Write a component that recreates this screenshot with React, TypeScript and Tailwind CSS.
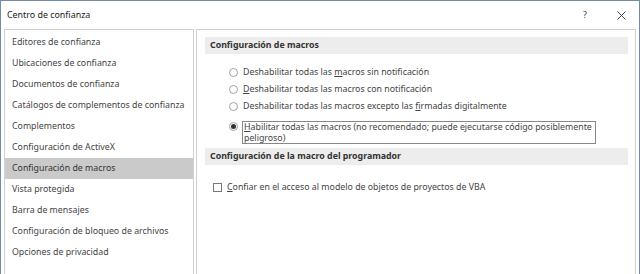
import React from "react";

const leftItems = [
  "Editores de confianza",
  "Ubicaciones de confianza",
  "Documentos de confianza",
  "Catálogos de complementos de confianza",
  "Complementos",
  "Configuración de ActiveX",
  "Configuración de macros",
  "Vista protegida",
  "Barra de mensajes",
  "Configuración de bloqueo de archivos",
  "Opciones de privacidad",
];

function Radio({ checked }: { checked?: boolean }) {
  return (
    <span className="w-[9px] h-[9px] rounded-full border border-[#a0a0a0] bg-white flex items-center justify-center shrink-0">
      {checked && <span className="w-[5px] h-[5px] rounded-full bg-[#333]" />}
    </span>
  );
}

export default function App() {
  return (
    <div
      className="w-[640px] h-[274px] bg-white border-x border-t border-[#6f8ca8] flex flex-col text-[8.8px] text-[#444] overflow-hidden"
      style={{ fontFamily: '"Noto Sans", "Open Sans", sans-serif' }}
    >
      <div className="h-[28px] flex items-center pl-[6px] pr-[13px] shrink-0">
        <span className="text-[#222] text-[8.9px] flex-1">Centro de confianza</span>
        <span className="text-[#444] text-[9px] mr-[30px]">?</span>
        <svg width="9" height="9" viewBox="0 0 9 9">
          <path d="M0.5 0.5 L8.5 8.5 M8.5 0.5 L0.5 8.5" stroke="#444" strokeWidth="1" />
        </svg>
      </div>
      <div className="flex flex-1 pl-[3px] pr-[3px] gap-[2px]">
        <div className="w-[190px] border border-[#d0d0d0] border-b-0 pt-[2px] flex flex-col">
          {leftItems.map((t, i) => (
            <div
              key={t}
              className={`h-[21px] flex items-center pl-[7px] whitespace-nowrap ${
                i === 6 ? "bg-[#cacaca] text-[#333]" : ""
              }`}
            >
              {t}
            </div>
          ))}
        </div>
        <div className="flex-1 border border-[#d0d0d0] border-b-0 pl-[8px] pr-[7px] pt-[7px] flex flex-col">
          <div className="h-[17px] bg-[#ededed] flex items-center pl-[5px] font-bold text-[#333]">
            Configuración de macros
          </div>
          <div className="flex flex-col pl-[24px] pt-[10px]">
            <div className="h-[17px] flex items-center gap-[5px]">
              <Radio />
              <span>
                Deshabilitar todas las <u>m</u>acros sin notificación
              </span>
            </div>
            <div className="h-[17px] flex items-center gap-[5px]">
              <Radio />
              <span>
                <u>D</u>eshabilitar todas las macros con notificación
              </span>
            </div>
            <div className="h-[17px] flex items-center gap-[5px]">
              <Radio />
              <span>
                Deshabilitar todas las macros excepto las <u>f</u>irmadas digitalmente
              </span>
            </div>
            <div className="flex items-start gap-[4px] mt-[6px]">
              <span className="mt-[1px]">
                <Radio checked />
              </span>
              <span className="w-[354px] h-[23px] border border-[#888] pl-[1px] leading-[11px]">
                <u>H</u>abilitar todas las macros (no recomendado; puede ejecutarse código posiblemente peligroso)
              </span>
            </div>
          </div>
          <div className="h-[17px] bg-[#ededed] flex items-center pl-[5px] font-bold text-[#333] mt-[4px]">
            Configuración de la macro del programador
          </div>
          <div className="h-[17px] flex items-center gap-[5px] pl-[8px] mt-[14px]">
            <span className="w-[9px] h-[9px] border border-[#777] bg-white shrink-0" />
            <span>
              <u>C</u>onfiar en el acceso al modelo de objetos de proyectos de VBA
            </span>
          </div>
        </div>
      </div>
    </div>
  );
}
